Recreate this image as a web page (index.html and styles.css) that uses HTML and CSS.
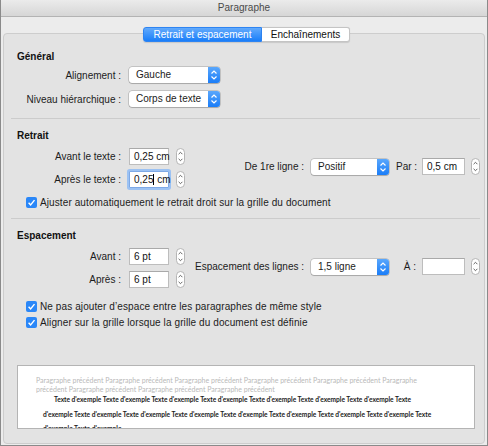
FILE: index.html
```html
<!DOCTYPE html>
<html>
<head>
    <link rel="stylesheet" href="styles.css">
</head>
<body>
<div class="window">
    <div class="titlebar">Paragraphe</div>

    <div class="window-body">
        <div class="tabs">
            <span class="tab tab--active">Retrait et espacement</span>
            <span class="tab">Enchaînements</span>
        </div>

        <div class="panel">

            <!-- Général -->
            <h2 class="group-title">Général</h2>
            <div class="select-grid">
                <div class="label">Alignement :</div>
                <div class="select select--wide">
                    <span class="select__value">Gauche</span>
                    <span class="select__arrows"><svg width="12" height="16" viewBox="0 0 12 16"><path d="M3.5 6.5 L6 4 L8.5 6.5 M3.5 9.5 L6 12 L8.5 9.5" fill="none" stroke="#fff" stroke-width="1.2"/></svg></span>
                </div>
                <div class="label">Niveau hiérarchique :</div>
                <div class="select select--wide">
                    <span class="select__value">Corps de texte</span>
                    <span class="select__arrows"><svg width="12" height="16" viewBox="0 0 12 16"><path d="M3.5 6.5 L6 4 L8.5 6.5 M3.5 9.5 L6 12 L8.5 9.5" fill="none" stroke="#fff" stroke-width="1.2"/></svg></span>
                </div>
            </div>

            <hr class="divider">

            <!-- Retrait -->
            <h2 class="group-title group-title--retrait">Retrait</h2>
            <div class="field-block">
                <div class="field-grid">
                    <div class="label">Avant le texte :</div>
                    <div class="input">0,25 cm</div>
                    <svg class="stepper" width="9" height="17" viewBox="0 0 9 17"><rect x="0.5" y="0.5" width="8" height="16" rx="4" fill="#fff" stroke="#b5b5b5"/><path d="M2.6 6.2 L4.5 4.3 L6.4 6.2 M2.6 10.8 L4.5 12.7 L6.4 10.8" fill="none" stroke="#555" stroke-width="0.9"/></svg>
                    <div class="label">Après le texte :</div>
                    <div class="input input--focus">0,25<span class="caret"></span> cm</div>
                    <svg class="stepper" width="9" height="17" viewBox="0 0 9 17"><rect x="0.5" y="0.5" width="8" height="16" rx="4" fill="#fff" stroke="#b5b5b5"/><path d="M2.6 6.2 L4.5 4.3 L6.4 6.2 M2.6 10.8 L4.5 12.7 L6.4 10.8" fill="none" stroke="#555" stroke-width="0.9"/></svg>
                </div>
                <div class="side-fields">
                    <div class="label side-fields__label">De 1re ligne :</div>
                    <div class="select select--narrow">
                        <span class="select__value">Positif</span>
                        <span class="select__arrows"><svg width="12" height="16" viewBox="0 0 12 16"><path d="M3.5 6.5 L6 4 L8.5 6.5 M3.5 9.5 L6 12 L8.5 9.5" fill="none" stroke="#fff" stroke-width="1.2"/></svg></span>
                    </div>
                    <div class="label side-fields__small">Par :</div>
                    <div class="input input--side">0,5 cm</div>
                    <svg class="stepper" width="9" height="17" viewBox="0 0 9 17"><rect x="0.5" y="0.5" width="8" height="16" rx="4" fill="#fff" stroke="#b5b5b5"/><path d="M2.6 6.2 L4.5 4.3 L6.4 6.2 M2.6 10.8 L4.5 12.7 L6.4 10.8" fill="none" stroke="#555" stroke-width="0.9"/></svg>
                </div>
            </div>
            <div class="check check--retrait">
                <svg width="11" height="11" viewBox="0 0 11 11"><rect width="11" height="11" rx="2" fill="#2a87f8"/><path d="M2.6 5.7 L4.6 7.9 L8.5 3.1" fill="none" stroke="#fff" stroke-width="1.4"/></svg>
                <span>Ajuster automatiquement le retrait droit sur la grille du document</span>
            </div>

            <hr class="divider divider--espacement">

            <!-- Espacement -->
            <h2 class="group-title group-title--espacement">Espacement</h2>
            <div class="field-block field-block--espacement">
                <div class="field-grid">
                    <div class="label">Avant :</div>
                    <div class="input">6 pt</div>
                    <svg class="stepper" width="9" height="17" viewBox="0 0 9 17"><rect x="0.5" y="0.5" width="8" height="16" rx="4" fill="#fff" stroke="#b5b5b5"/><path d="M2.6 6.2 L4.5 4.3 L6.4 6.2 M2.6 10.8 L4.5 12.7 L6.4 10.8" fill="none" stroke="#555" stroke-width="0.9"/></svg>
                    <div class="label">Après :</div>
                    <div class="input">6 pt</div>
                    <svg class="stepper" width="9" height="17" viewBox="0 0 9 17"><rect x="0.5" y="0.5" width="8" height="16" rx="4" fill="#fff" stroke="#b5b5b5"/><path d="M2.6 6.2 L4.5 4.3 L6.4 6.2 M2.6 10.8 L4.5 12.7 L6.4 10.8" fill="none" stroke="#555" stroke-width="0.9"/></svg>
                </div>
                <div class="side-fields">
                    <div class="label side-fields__label">Espacement des lignes :</div>
                    <div class="select select--narrow">
                        <span class="select__value">1,5 ligne</span>
                        <span class="select__arrows"><svg width="12" height="16" viewBox="0 0 12 16"><path d="M3.5 6.5 L6 4 L8.5 6.5 M3.5 9.5 L6 12 L8.5 9.5" fill="none" stroke="#fff" stroke-width="1.2"/></svg></span>
                    </div>
                    <div class="label side-fields__small">À :</div>
                    <div class="input input--side"></div>
                    <svg class="stepper" width="9" height="17" viewBox="0 0 9 17"><rect x="0.5" y="0.5" width="8" height="16" rx="4" fill="#fff" stroke="#b5b5b5"/><path d="M2.6 6.2 L4.5 4.3 L6.4 6.2 M2.6 10.8 L4.5 12.7 L6.4 10.8" fill="none" stroke="#555" stroke-width="0.9"/></svg>
                </div>
            </div>
            <div class="check check--first">
                <svg width="11" height="11" viewBox="0 0 11 11"><rect width="11" height="11" rx="2" fill="#2a87f8"/><path d="M2.6 5.7 L4.6 7.9 L8.5 3.1" fill="none" stroke="#fff" stroke-width="1.4"/></svg>
                <span>Ne pas ajouter d’espace entre les paragraphes de même style</span>
            </div>
            <div class="check check--second">
                <svg width="11" height="11" viewBox="0 0 11 11"><rect width="11" height="11" rx="2" fill="#2a87f8"/><path d="M2.6 5.7 L4.6 7.9 L8.5 3.1" fill="none" stroke="#fff" stroke-width="1.4"/></svg>
                <span>Aligner sur la grille lorsque la grille du document est définie</span>
            </div>

            <!-- Aperçu -->
            <div class="preview">
                <p class="preview__previous">Paragraphe précédent Paragraphe précédent Paragraphe précédent Paragraphe précédent Paragraphe précédent Paragraphe précédent Paragraphe précédent Paragraphe précédent Paragraphe précédent</p>
                <p class="preview__sample">Texte d'exemple Texte d'exemple Texte d'exemple Texte d'exemple Texte d'exemple Texte d'exemple Texte d'exemple Texte d'exemple Texte d'exemple Texte d'exemple Texte d'exemple Texte d'exemple Texte d'exemple Texte d'exemple Texte d'exemple Texte d'exemple Texte d'exemple</p>
            </div>
        </div>
    </div>
</div>
</body>
</html>
```

FILE: styles.css
```css
html, body {
    margin: 0;
    padding: 0;
    background-color: #ececec;
}

.window {
    width: 488px;
    height: 446px;
    box-sizing: border-box;
    border: 1px solid #8a8a8a;
    border-top: none;
    background-color: #ececec;
    display: flex;
    flex-direction: column;
    font-family: "Liberation Sans", Arial, sans-serif;
    font-size: 10px;
    color: #1c1c1c;
}

.titlebar {
    height: 16px;
    line-height: 16px;
    text-align: center;
    color: #4a4a4a;
    background: linear-gradient(#ebebeb, #d6d6d6);
    border-bottom: 1px solid #b3b3b3;
}

.window-body {
    flex: 1;
    display: flex;
    flex-direction: column;
    padding: 10px 2px 1px 2px;
}

/* segmented control */

.tabs {
    display: flex;
    justify-content: center;
    padding-left: 5px;
    position: relative;
    z-index: 1;
}

.tab {
    height: 15px;
    box-sizing: border-box;
    line-height: 13px;
    text-align: center;
    background-color: #ffffff;
    border: 1px solid #c4c4c4;
    border-left: none;
    border-radius: 0 3px 3px 0;
    width: 88px;
    color: #111;
    box-shadow: 0 0.5px 1px rgba(0, 0, 0, 0.12);
}

.tab--active {
    width: 119px;
    color: #ffffff;
    background: linear-gradient(#62aafc, #1a7ef9);
    border: 1px solid #2e84f2;
    border-radius: 3px 0 0 3px;
}

.panel {
    flex: 1;
    margin-top: -9px;
    border: 1px solid #cdcdcd;
    border-radius: 4px;
    background-color: #e3e3e3;
    padding: 17px 0 0 13px;
}

.group-title {
    margin: 0;
    font-size: 10px;
    font-weight: bold;
    line-height: 12px;
    height: 12px;
    color: #111;
}

.group-title--retrait {
    margin-top: 11px;
}

.group-title--espacement {
    margin-top: 11px;
}

.divider {
    margin: 11px 4px 0 -6px;
    border: 0;
    border-top: 1px solid #cccccc;
    height: 0;
}

.divider--espacement {
    margin-top: 10px;
}

.label {
    text-align: right;
    white-space: nowrap;
}

/* selects */

.select-grid {
    margin-top: 4px;
    display: grid;
    grid-template-columns: 104px 91px;
    grid-auto-rows: 16px;
    column-gap: 8px;
    row-gap: 8px;
    align-items: center;
}

.select {
    height: 16px;
    box-sizing: border-box;
    display: flex;
    background-color: #ffffff;
    border-radius: 3px;
    box-shadow: 0 0 0 0.5px rgba(0, 0, 0, 0.28), 0 1px 1px rgba(0, 0, 0, 0.14);
}

.select--wide {
    width: 91px;
}

.select--narrow {
    width: 78px;
}

.select__value {
    flex: 1;
    line-height: 16px;
    padding-left: 7px;
    white-space: nowrap;
    overflow: hidden;
}

.select__arrows {
    width: 12px;
    height: 16px;
    border-radius: 0 3px 3px 0;
    background: linear-gradient(#5aa7fc, #1a7df8);
}

.select__arrows svg {
    display: block;
}

/* inputs and steppers */

.field-block {
    margin-top: 6px;
    display: flex;
}

.field-block--espacement {
    margin-top: 6px;
}

.field-grid {
    display: grid;
    grid-template-columns: 104px 40px 9px;
    grid-auto-rows: 17px;
    column-gap: 8px;
    row-gap: 6px;
    align-items: center;
}

.field-grid .stepper {
    margin-left: -1px;
}

.input {
    height: 17px;
    box-sizing: border-box;
    background-color: #ffffff;
    border: 1px solid #bdbdbd;
    border-top-color: #a9a9a9;
    padding-left: 4px;
    line-height: 15px;
    color: #111;
    white-space: nowrap;
}

.input--focus {
    border-color: #7ea9e6;
    border-radius: 1px;
    box-shadow: 0 0 0 2px #9cc2f3;
}

.input--side {
    width: 43px;
}

.caret {
    display: inline-block;
    width: 1px;
    height: 11px;
    background-color: #000;
    vertical-align: -2px;
}

.stepper {
    display: block;
}

.side-fields {
    margin-left: 5px;
    display: flex;
    align-items: center;
    align-self: center;
    margin-top: -3px;
}

.side-fields__label {
    width: 113px;
    margin-right: 7px;
}

.side-fields__small {
    width: 20px;
    margin-left: 7px;
    margin-right: 6px;
}

.side-fields .stepper {
    margin-left: 6px;
}

/* checkboxes */

.check {
    display: flex;
    align-items: center;
    height: 12px;
    margin-left: 9px;
    gap: 3px;
}

.check span {
    letter-spacing: 0.1px;
}

.check svg {
    display: block;
}

.check--retrait {
    margin-top: 8px;
}

.check--first {
    margin-top: 12px;
}

.check--second {
    margin-top: 4px;
}

/* preview */

.preview {
    margin-top: 37px;
    width: 458px;
    height: 64px;
    box-sizing: border-box;
    border: 1px solid #b4b4b4;
    background-color: #ffffff;
    overflow: hidden;
    padding: 10px 33px 0 18px;
    font-family: Lato, "Open Sans", sans-serif;
    font-size: 7px;
}

.preview p {
    margin: 0;
}

.preview__previous {
    color: #b9b9b9;
    line-height: 9px;
    height: 18px;
    overflow: hidden;
    margin-right: 3px !important;
}

.preview__sample {
    font-size: 6.6px;
    font-weight: bold;
    color: #222;
    line-height: 14.5px;
    margin-top: -2px !important;
    padding-left: 7px;
    text-indent: 11px;
}
```
